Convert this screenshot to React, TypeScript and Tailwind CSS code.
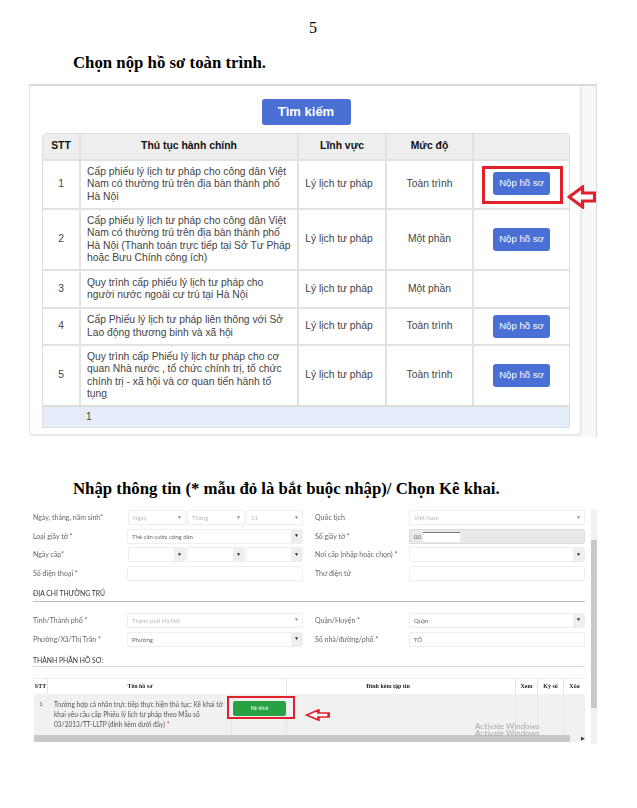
import React from "react";

const procedures = [
  { id: 1, h: "h-[49px]", name: "Cấp phiếu lý lịch tư pháp cho công dân Việt Nam có thường trú trên địa bàn thành phố Hà Nội", level: "Toàn trình", action: true, marked: true },
  { id: 2, h: "h-[61px]", name: "Cấp phiếu lý lịch tư pháp cho công dân Việt Nam có thường trú trên địa bàn thành phố Hà Nội (Thanh toán trực tiếp tại Sở Tư Pháp hoặc Bưu Chính công ích)", level: "Một phần", action: true },
  { id: 3, h: "h-[38px]", name: "Quy trình cấp phiếu lý lịch tư pháp cho người nước ngoài cư trú tại Hà Nội", level: "Một phần", action: false },
  { id: 4, h: "h-[37px]", name: "Cấp Phiếu lý lịch tư pháp liên thông với Sở Lao động thương binh và xã hội", level: "Toàn trình", action: true },
  { id: 5, h: "h-[61px]", name: "Quy trình cấp Phiếu lý lịch tư pháp cho cơ quan Nhà nước , tổ chức chính trị, tổ chức chính trị - xã hội và cơ quan tiến hành tố tụng", level: "Toàn trình", action: true },
];

const Arrow = ({ className }: { className: string }) => (
  <svg className={className} viewBox="0 0 28 24" fill="white" stroke="#e2202c" strokeWidth="3" preserveAspectRatio="none">
    <path d="M2 12 L15 2 V8 H26.5 V16 H15 V22 Z" />
  </svg>
);

const Select = ({ value, w = "w-[176px]", faded }: { value?: string; w?: string; faded?: boolean }) => (
  <div className={`${w} h-[15px] flex items-center justify-between border border-[#eceef0] rounded-[2px] bg-white`}>
    <span className={`pl-1 text-[6px] ${faded ? "text-[#b5b8bb]" : "text-[#666]"}`}>{value}</span>
    <span className={`h-full w-[11px] flex items-center justify-center text-[5px] ${faded ? "text-[#888]" : "text-[#222] bg-[#eeeeee]"}`}>▼</span>
  </div>
);

const Input = ({ value }: { value?: string }) => (
  <div className="w-[176px] h-[15px] flex items-center border border-[#eceef0] rounded-[2px] pl-1 text-[6px] text-[#666]">{value}</div>
);

const Field = ({ label, children }: { label: string; children: React.ReactNode }) => (
  <div className="w-[270px] flex items-center justify-between">
    <span className="text-[7px] text-[#666]">{label}</span>
    {children}
  </div>
);

export default function App() {
  return (
    <div className="relative w-[637px] h-[808px] overflow-hidden bg-white font-['Liberation_Serif',serif] text-black">
      <div className="pt-[19px] pl-[309px] text-[16px] leading-[18px]">5</div>
      <h2 className="mt-[16px] pl-[73px] text-[16.8px] leading-[20px] font-bold">Chọn nộp hồ sơ toàn trình.</h2>

      {/* first screenshot */}
      <div className="relative mt-[11px] ml-[29px] w-[568px] h-[353px] flex border-t-2 border-r border-[#d8dbe2] bg-[#f8f8fa] font-['Liberation_Sans',sans-serif]">
        <div className="w-[553px] h-[350px] bg-white border-l border-r-2 border-b-2 border-[#e8e9ec] rounded-b-[5px] pl-[12px]">
          <div className="w-[528px] flex justify-center pt-[13px] pb-[8px]">
            <button className="w-[89px] h-[26px] rounded-[3px] bg-[#4a70d5] text-white text-[13px] font-bold">Tìm kiếm</button>
          </div>
          <div className="w-[528px] border border-[#dedede] rounded-t-[4px] text-[10.3px] leading-[12.2px] text-[#444]">
            <div className="flex h-[25px] bg-[#eeeeee] font-bold text-[#111] text-[10.4px] text-center items-stretch">
              <div className="w-[38px] flex items-center justify-center border-r-2 border-[#e2e2e2]">STT</div>
              <div className="w-[218px] flex items-center justify-center border-r-2 border-[#e2e2e2]">Thủ tục hành chính</div>
              <div className="w-[88px] flex items-center justify-center border-r-2 border-[#e2e2e2]">Lĩnh vực</div>
              <div className="w-[87px] flex items-center justify-center border-r-2 border-[#e2e2e2]">Mức độ</div>
              <div className="flex-1" />
            </div>
            {procedures.map((p) => (
              <div key={p.id} className={`flex ${p.h} border-t-2 border-[#e2e2e2]`}>
                <div className="w-[38px] flex items-center justify-center border-r-2 border-[#e2e2e2]">{p.id}</div>
                <div className="w-[218px] flex items-center pl-[6px] pr-[6px] border-r-2 border-[#e2e2e2]">{p.name}</div>
                <div className="w-[88px] flex items-center justify-center pr-[6px] border-r-2 border-[#e2e2e2]">Lý lịch tư pháp</div>
                <div className="w-[87px] flex items-center justify-center border-r-2 border-[#e2e2e2]">{p.level}</div>
                <div className="flex-1 flex items-center justify-center">
                  {p.action && (
                    <div className={p.marked ? "border-[3px] border-[#e2202c] pl-[8px] pr-[10px] pt-[3px] pb-[6px] ml-[2px]" : ""}>
                      <button className="block w-[57px] h-[23px] rounded-[3px] bg-[#4a70d5] text-white text-[9.6px]">Nộp hồ sơ</button>
                    </div>
                  )}
                </div>
              </div>
            ))}
            <div className="h-[22px] flex items-center border-t-2 border-[#dedede] bg-[#e4edf9] pl-[43px]">1</div>
          </div>
        </div>
        <Arrow className="absolute left-[538px] top-[99px] w-[29px] h-[24px]" />
      </div>

      <h2 className="mt-[42px] pl-[73px] text-[16.8px] leading-[20px] font-bold">Nhập thông tin (* mẫu đỏ là bắt buộc nhập)/ Chọn Kê khai.</h2>

      {/* second screenshot */}
      <div className="relative mt-[10px] ml-[33px] w-[564px] h-[235px] flex font-['Lato',sans-serif] blur-[0.4px]">
        <div className="w-[552px] flex flex-col">
          <div className="grid grid-cols-[282px_1fr] gap-y-[3.5px] mt-[1px]">
            <Field label="Ngày, tháng, năm sinh*">
              <div className="flex gap-[1px]">
                <Select value="Ngày" w="w-[58px]" faded />
                <Select value="Tháng" w="w-[58px]" faded />
                <Select value="11" w="w-[57px]" faded />
              </div>
            </Field>
            <Field label="Quốc tịch"><Select value="Việt Nam" faded /></Field>
            <Field label="Loại giấy tờ *"><Select value="Thẻ căn cước công dân" /></Field>
            <Field label="Số giấy tờ *">
              <div className="relative w-[176px] h-[15px] flex items-center border border-[#dcdcdc] rounded-[2px] bg-[#e9e9e9] pl-1 text-[6px] text-[#666]">
                00
                <span className="absolute left-[13px] top-[2px] w-[37px] h-[10px] bg-white border-t border-[#777]" />
              </div>
            </Field>
            <Field label="Ngày cấp*">
              <div className="flex gap-[1px]">
                <Select w="w-[58px]" />
                <Select w="w-[58px]" />
                <Select w="w-[57px]" />
              </div>
            </Field>
            <Field label="Nơi cấp (nhập hoặc chọn) *"><Select /></Field>
            <Field label="Số điện thoại *"><Input /></Field>
            <Field label="Thư điện tử"><Input /></Field>
          </div>

          <div className="mt-[8px] pb-[3px] border-b border-[#b4bcc8] text-[6.8px] leading-[9px] text-[#333]">ĐỊA CHỈ THƯỜNG TRÚ</div>

          <div className="grid grid-cols-[282px_1fr] gap-y-[4px] mt-[11px]">
            <Field label="Tỉnh/Thành phố *"><Select value="Thành phố Hà Nội" faded /></Field>
            <Field label="Quận/Huyện *"><Select value="Quận" /></Field>
            <Field label="Phường/Xã/Thị Trấn *"><Select value="Phường" /></Field>
            <Field label="Số nhà/đường/phố *"><Input value="TỔ" /></Field>
          </div>

          <div className="mt-[9px] pb-[1px] border-b border-[#cfd6ea] text-[6.8px] leading-[9px] text-[#333]">THÀNH PHẦN HỒ SƠ:</div>

          <div className="mt-[11px] ml-[1px] text-[6px] text-[#555]">
            <div className="flex h-[16px] items-stretch font-['Liberation_Serif',serif] font-bold text-[#222] text-center border-t border-[#eee]">
              <div className="w-[14px] flex items-center justify-center border-r border-[#e4e4e4]">STT</div>
              <div className="w-[184px] flex items-center justify-center">Tên hồ sơ</div>
              <div className="w-[55px] border-r border-[#e4e4e4]" />
              <div className="w-[229px] flex items-center justify-center pr-[26px] border-r border-[#e4e4e4]">Đính kèm tập tin</div>
              <div className="w-[22px] flex items-center justify-center border-r border-[#e4e4e4]">Xem</div>
              <div className="w-[26px] flex items-center justify-center border-r border-[#e4e4e4]">Ký số</div>
              <div className="flex-1 flex items-center justify-center">Xóa</div>
            </div>
            <div className="flex h-[41px] bg-[#f1f1f1] leading-[10px]">
              <div className="w-[14px] pt-[5px] text-center">1</div>
              <div className="w-[184px] pt-[5px] pl-[6px] pr-[6px] border-r border-[#e4e4e4] text-[6.6px]">
                Trường hợp cá nhân trực tiếp thực hiện thủ tục: Kê khai tờ khai yêu cầu cấp Phiếu lý lịch tư pháp theo Mẫu số 03/2013/TT-LLTP (đính kèm dưới đây) <span className="text-[#d33]">*</span>
              </div>
              <div className="w-[55px] pt-[2px] border-r border-[#e4e4e4]">
                <div className="w-[68px] -ml-[5px] border-[2px] border-[#e2202c] pl-[4px] pt-[3px] pb-[1px] bg-[#f1f1f1]">
                  <button className="block w-[53px] h-[15px] rounded-[2px] bg-[#27a243] text-white text-[5.5px]">Kê khai</button>
                </div>
              </div>
              <div className="w-[229px] border-r border-[#e8e8e8]" />
              <div className="w-[22px] border-r border-[#e8e8e8]" />
              <div className="w-[26px] border-r border-[#e8e8e8]" />
            </div>
          </div>

          <div className="ml-[1px] h-[7px] flex items-center bg-[#f1f1f1]">
            <div className="w-[539px] h-full bg-[#c8c8c8]" />
            <span className="ml-[11px] text-[5px] leading-none text-[#333]">▶</span>
          </div>
        </div>

        <div className="ml-[6px] w-[6px] h-full bg-[#f1f1f1] flex flex-col">
          <div className="mt-[31px] h-[168px] bg-[#c8c8c8]" />
        </div>

        <Arrow className="absolute left-[272px] top-[200px] w-[25px] h-[12px]" />
        <div className="absolute left-[442px] top-[214px] text-[8px] leading-[7px] text-[#a8a8a8]">
          <div>Activate Windows</div>
          <div>Activate Windows</div>
        </div>
      </div>
    </div>
  );
}
